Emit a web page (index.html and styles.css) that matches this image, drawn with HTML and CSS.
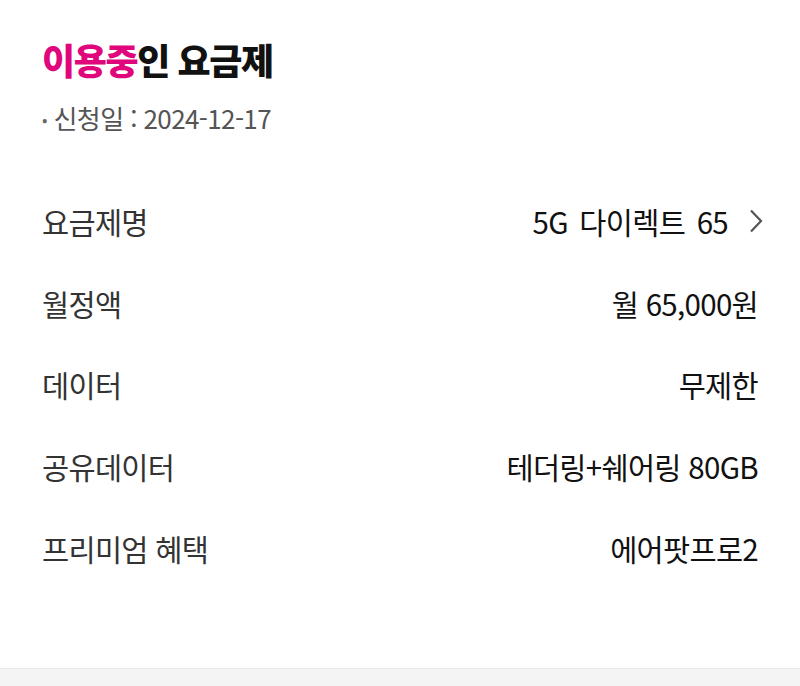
FILE: index.html
```html
<!DOCTYPE html>
<html lang="ko">
<head>
<meta charset="utf-8">
<link rel="stylesheet" href="styles.css">
</head>
<body>
<main class="page">
  <h1 class="title"><span class="accent">이용중</span>인 요금제</h1>
  <p class="date"><span class="dot">•</span> 신청일 : 2024-12-17</p>
  <ul class="rows">
    <li class="row"><span class="label">요금제명</span><span class="value plan">5G 다이렉트 65<svg class="chev" width="16" height="26" viewBox="0 0 16 26"><path d="M3 2.5 L13 13 L3 23.5" fill="none" stroke="#555" stroke-width="2.2"/></svg></span></li>
    <li class="row"><span class="label">월정액</span><span class="value">월 65,000원</span></li>
    <li class="row"><span class="label">데이터</span><span class="value">무제한</span></li>
    <li class="row"><span class="label">공유데이터</span><span class="value">테더링+쉐어링 80GB</span></li>
    <li class="row"><span class="label">프리미엄 혜택</span><span class="value">에어팟프로2</span></li>
  </ul>
</main>
<footer class="bottom"></footer>
</body>
</html>
```
FILE: styles.css
```css
html, body { margin: 0; padding: 0; background: #fff; }
body {
  font-family: "Noto Sans CJK KR", "Noto Sans", sans-serif;
  height: 686px;
  overflow: hidden;
  display: flex;
  flex-direction: column;
}
.page { padding: 29px 42px 0 42px; flex: 1; }
.title {
  margin: 0;
  font-size: 36px;
  font-weight: 800;
  color: #111;
  letter-spacing: -1.4px;
  line-height: 60px;
}
.accent { color: #e0067c; }
.date {
  margin: 14px 0 0 0;
  font-size: 26px;
  color: #555;
  letter-spacing: -0.6px;
  line-height: 30px;
}
.dot { font-size: 16px; vertical-align: 3px; color: #666; }
.rows { list-style: none; margin: 46px 0 0 0; padding: 0; }
.row {
  display: flex;
  justify-content: space-between;
  align-items: center;
  height: 81.7px;
  font-size: 29.5px;
  letter-spacing: -0.7px;
}
.label { color: #333; }
.value { color: #111; display: flex; align-items: center; }
.plan { word-spacing: 4px; }
.chev { margin-left: 20px; margin-right: -6px; }
.bottom {
  height: 17px;
  background: #f4f4f4;
  border-top: 1px solid #ebebeb;
}
```
